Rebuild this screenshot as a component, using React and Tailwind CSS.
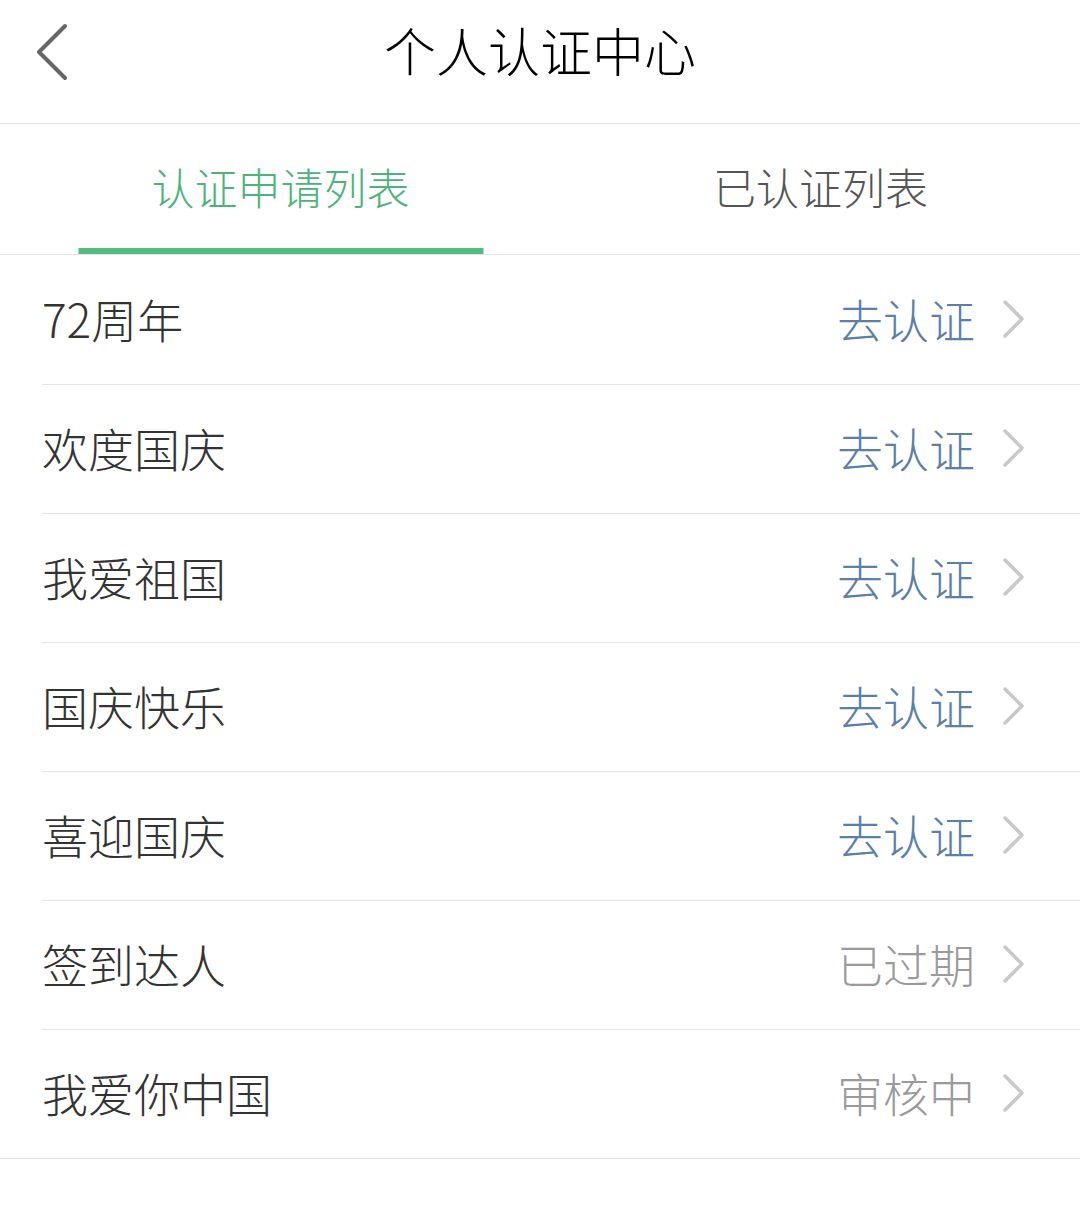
import React, { useState } from 'react'

const items = [
    { name: '72周年', status: '去认证', active: true },
    { name: '欢度国庆', status: '去认证', active: true },
    { name: '我爱祖国', status: '去认证', active: true },
    { name: '国庆快乐', status: '去认证', active: true },
    { name: '喜迎国庆', status: '去认证', active: true },
    { name: '签到达人', status: '已过期', active: false },
    { name: '我爱你中国', status: '审核中', active: false },
]

function Chevron({ className }) {
    return (
        <svg width="26" height="40" viewBox="0 0 26 40" fill="none" className={className}>
            <path d="M4 3 L21 20 L4 37" stroke="currentColor" strokeWidth="3.5" strokeLinecap="round" strokeLinejoin="round" />
        </svg>
    )
}

export default function App() {
    const [ tab , setTab ] = useState(0)

    return (
        <div className="w-[1080px] h-[1232px] bg-white overflow-hidden" style={{ fontFamily: '"Noto Sans CJK SC", "Noto Sans", sans-serif' }}>
            <div className="h-[124px] flex items-center relative border-b border-[#e0e0e0]">
                <button className="absolute left-[30px] top-[22px] text-[#666666]">
                    <svg width="44" height="60" viewBox="0 0 44 60" fill="none">
                        <path d="M35 4 L9 30 L35 56" stroke="currentColor" strokeWidth="4" strokeLinecap="round" strokeLinejoin="round" />
                    </svg>
                </button>
                <h1 className="w-full text-center text-[52px] leading-none font-light text-black -mt-[24px]">个人认证中心</h1>
            </div>

            <div className="h-[131px] grid grid-cols-2 gap-[21px] pl-[21px] border-b border-[#e6e6e6]">
                {['认证申请列表', '已认证列表'].map((t, i) => (
                    <button key={t} onClick={()=>{setTab(i)}} className="relative flex items-center justify-center">
                        <span className={`text-[43px] leading-none font-light -mt-[6px] ${tab === i ? 'text-[#4cb47a]' : 'text-[#555555]'}`}>{t}</span>
                        {tab === i && <span className="absolute bottom-0 left-1/2 -translate-x-1/2 w-[405px] h-[6px] bg-[#55bb80]"></span>}
                    </button>
                ))}
            </div>

            <div className="pt-px">
                {items.map((it, i) => (
                    <div key={it.name} className={`h-[129px] flex items-center border-b border-[#e3e3e3] ${i === items.length - 1 ? '' : 'ml-[42px]'}`}>
                        <div className={`flex-1 flex items-center ${i === items.length - 1 ? 'pl-[42px]' : ''}`}>
                            <span className="text-[46px] leading-none font-light text-[#333333] -mt-[4px]">{it.name}</span>
                        </div>
                        <span className={`text-[46px] leading-none font-light -mt-[4px] ${it.active ? 'text-[#5a80aa]' : 'text-[#9a9a9a]'}`}>{it.status}</span>
                        <Chevron className="ml-[26px] mr-[53px] text-[#c8c8c8] -mt-[2px]" />
                    </div>
                ))}
            </div>
        </div>
    )
}
